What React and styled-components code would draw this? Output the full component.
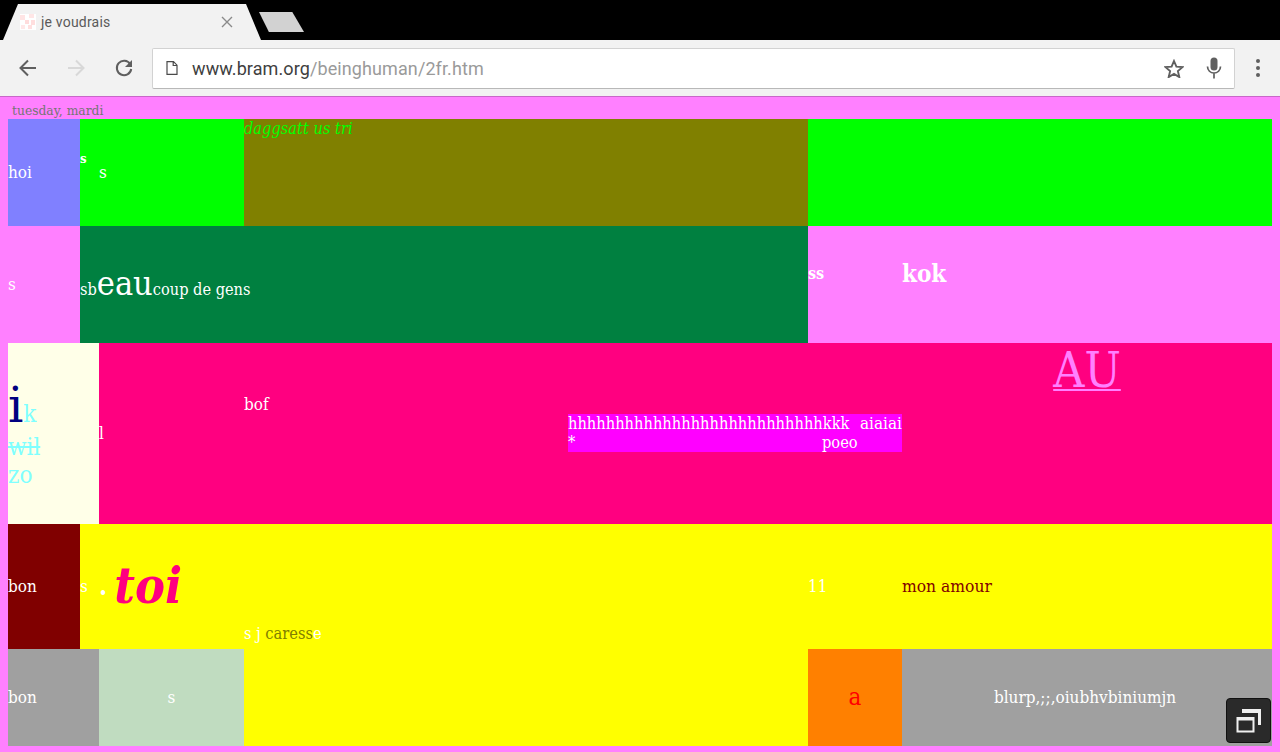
import React from 'react'
import styled, { createGlobalStyle } from 'styled-components'

const GlobalStyle = createGlobalStyle`
    html, body {
        margin: 0;
        padding: 0;
        background: #ff80ff;
    }
    body {
        font-family: "DejaVu Serif Condensed", "DejaVu Serif", serif;
        font-size: 17px;
        color: #fff;
    }
`

const App = () => {
  return (
    <Window>
      <GlobalStyle />
      <TabStrip>
        <Tab>
          <Favicon />
          <TabTitle>je voudrais</TabTitle>
          <CloseIcon />
        </Tab>
        <NewTab />
      </TabStrip>
      <Toolbar>
        <NavButton><BackIcon color="#5f5f5f" /></NavButton>
        <NavButton><ForwardIcon color="#d8d8d8" /></NavButton>
        <NavButton><ReloadIcon /></NavButton>
        <Omnibox>
          <PageIcon />
          <Url>www.bram.org<span>/beinghuman/2fr.htm</span></Url>
          <StarIcon />
          <MicIcon />
        </Omnibox>
        <MenuDots><i /><i /><i /></MenuDots>
      </Toolbar>
      <Page>
        <Day>tuesday, mardi</Day>
        <Table>
          <Cell $span={1} $bg="#8080ff">hoi</Cell>
          <Cell $span={2} $bg="#00ff00"><RaisedS>s</RaisedS><span>s</span></Cell>
          <Cell $span={2} $bg="#808000" $align="flex-start"><Dagg>daggsatt us tri</Dagg></Cell>
          <Cell $span={2} $bg="#00ff00" />

          <Cell $span={1}>s</Cell>
          <Cell $span={4} $bg="#008040"><Beau>sb<Eau>eau</Eau>coup de gens</Beau></Cell>
          <Cell $span={1}><Ss>ss</Ss></Cell>
          <Cell $span={1}><Kok>kok</Kok></Cell>

          <Cell $span={2} $bg="#ffffe8"><Ik><Big>i</Big>k<br /><s>wil</s><br />zo</Ik></Cell>
          <Cell $span={1} $bg="#ff0080">l</Cell>
          <Cell $span={1} $bg="#ff0080" $align="flex-start"><Bof>bof</Bof></Cell>
          <Cell $span={2} $bg="#ff0080">
            <Block>
              <span>hhhhhhhhhhhhhhhhhhhhhhhhhhhkkk</span>
              <Aiai>aiaiai</Aiai>
              <span>*</span>
              <span>poeo</span>
            </Block>
          </Cell>
          <Cell $span={1} $bg="#ff0080" $justify="center" $align="flex-start"><Au>AU</Au></Cell>

          <Cell $span={1} $bg="#800000">bon</Cell>
          <Cell $span={2} $bg="#ffff00"><NarrowS>s</NarrowS><Dot>.</Dot><Toi>toi</Toi></Cell>
          <Cell $span={2} $bg="#ffff00" $align="flex-end"><Caresse>s j <span>caress</span>e</Caresse></Cell>
          <Cell $span={1} $bg="#ffff00">11</Cell>
          <Cell $span={1} $bg="#ffff00"><Amour>mon amour</Amour></Cell>

          <Cell $span={2} $bg="#a0a0a0">bon</Cell>
          <Cell $span={1} $bg="#c0dcc0" $justify="center">s</Cell>
          <Cell $span={2} $bg="#ffff00" />
          <Cell $span={1} $bg="#ff8000" $justify="center"><LetterA>a</LetterA></Cell>
          <Cell $span={1} $bg="#a0a0a0" $justify="center"><Blurp>blurp,;;,oiubhvbiniumjn</Blurp></Cell>
        </Table>
      </Page>
      <TabSwitcher><SwitcherIcon /></TabSwitcher>
    </Window>
  )
}

export default App

const Favicon = () => (
  <FaviconSvg viewBox="0 0 16 16">
    <rect width="16" height="16" fill="#fff" />
    <rect x="0" y="1" width="5" height="5" fill="#ffe4e4" />
    <rect x="9" y="0" width="5" height="4" fill="#ffe6e6" />
    <rect x="5" y="6" width="4" height="4" fill="#ffdcdc" />
    <rect x="11" y="6" width="4" height="5" fill="#ffdede" />
    <rect x="1" y="11" width="4" height="4" fill="#ffe8e8" />
    <rect x="8" y="11" width="4" height="4" fill="#ffe0e0" />
  </FaviconSvg>
)

const CloseIcon = () => (
  <CloseSvg width="12" height="12" viewBox="0 0 12 12">
    <path d="M1 1l10 10M11 1L1 11" stroke="#8a8a8a" strokeWidth="1.4" fill="none" />
  </CloseSvg>
)

const BackIcon = ({ color }) => (
  <IconSvg width="20" height="20" viewBox="0 0 20 20">
    <path d="M18 10H3M10 2.500L2.500 10l7.500 7.500" stroke={color} strokeWidth="2" fill="none" />
  </IconSvg>
)

const ForwardIcon = ({ color }) => (
  <IconSvg width="20" height="20" viewBox="0 0 20 20">
    <path d="M2 10h15M10 2.500l7.500 7.500-7.500 7.500" stroke={color} strokeWidth="2" fill="none" />
  </IconSvg>
)

const ReloadIcon = () => (
  <IconSvg width="20" height="20" viewBox="0 0 20 20">
    <path d="M16.200 6.200A7.200 7.200 0 1 0 17.200 11" stroke="#5f5f5f" strokeWidth="2" fill="none" />
    <path d="M18 2v7h-7z" fill="#5f5f5f" />
  </IconSvg>
)

const PageIcon = () => (
  <IconSvg width="12" height="14" viewBox="0 0 12 14">
    <path d="M1 .7h6.500L11 4.200v9.100H1zM7.200.7v3.800H11" stroke="#4a4a4a" strokeWidth="1.200" fill="none" />
  </IconSvg>
)

const StarIcon = () => (
  <StarSvg width="20" height="19" viewBox="0 0 20 19">
    <path d="M10 2l2.400 5.600 6.100.5-4.600 4 1.400 6-5.300-3.200-5.300 3.200 1.400-6-4.600-4 6.100-.5z" stroke="#5f5f5f" strokeWidth="1.900" fill="none" />
  </StarSvg>
)

const MicIcon = () => (
  <MicSvg width="16" height="22" viewBox="0 0 16 22">
    <rect x="4.500" y="0.500" width="7" height="13" rx="3.500" fill="#5f5f5f" />
    <path d="M1.500 9.500c0 4 3 6.500 6.500 6.500s6.500-2.500 6.500-6.500M8 16v5.500" stroke="#5f5f5f" strokeWidth="1.700" fill="none" />
  </MicSvg>
)

const SwitcherIcon = () => (
  <IconSvg width="26" height="26" viewBox="0 0 26 26">
    <path d="M6 1h19v16h-3V5H6z" fill="#f0f0f0" />
    <rect x="1.500" y="10" width="16" height="13.500" fill="#2a2a2a" stroke="#f0f0f0" strokeWidth="2" />
    <rect x="1" y="9" width="17" height="3.500" fill="#f0f0f0" />
  </IconSvg>
)

const Window = styled.div`
    position: relative;
    height: 752px;
    overflow: hidden;
`
const TabStrip = styled.div`
    height: 40px;
    background: #000;
    display: flex;
    align-items: flex-end;
    padding-left: 3px;
`
const Tab = styled.div`
    width: 258px;
    height: 36px;
    box-sizing: border-box;
    padding: 0 28px 0 17px;
    background: #f2f2f2;
    clip-path: polygon(0 100%, 15px 0, 243px 0, 100% 100%);
    display: flex;
    align-items: center;
    gap: 5px;
`
const FaviconSvg = styled.svg`
    width: 16px;
    height: 16px;
    flex: none;
`
const IconSvg = styled.svg`
    display: block;
    flex: none;
`
const CloseSvg = styled(IconSvg)`
    margin-left: auto;
`
const StarSvg = styled(IconSvg)`
    margin-left: auto;
`
const MicSvg = styled(IconSvg)`
    margin-left: 22px;
    margin-right: 12px;
`
const TabTitle = styled.div`
    font-family: Roboto, sans-serif;
    font-size: 14px;
    letter-spacing: 0.2px;
    color: #5a5a5a;
`
const NewTab = styled.div`
    width: 45px;
    height: 20px;
    margin: 0 0 8px -2px;
    background: #d2d2d2;
    clip-path: polygon(0 0, 74% 0, 100% 100%, 22% 100%);
`
const Toolbar = styled.div`
    height: 57px;
    box-sizing: border-box;
    background: #f2f2f2;
    border-bottom: 1px solid #c868c8;
    display: flex;
    align-items: center;
    padding-left: 4px;
`
const NavButton = styled.div`
    width: 48px;
    display: flex;
    justify-content: center;
`
const Omnibox = styled.div`
    width: 1083px;
    height: 41px;
    box-sizing: border-box;
    margin-left: 4px;
    background: #fff;
    border: 1px solid #d2d2d2;
    border-bottom: 1px solid #b8b8b8;
    border-radius: 2px;
    display: flex;
    align-items: center;
    padding-left: 13px;
`
const Url = styled.div`
    margin-left: 14px;
    font-family: Roboto, sans-serif;
    font-size: 18px;
    letter-spacing: 0.1px;
    color: #404040;
    span {
        color: #9a9a9a;
    }
`
const MenuDots = styled.div`
    margin-left: 21px;
    display: flex;
    flex-direction: column;
    gap: 3px;
    i {
        display: block;
        width: 4px;
        height: 4px;
        border-radius: 50%;
        background: #5f5f5f;
    }
`
const Page = styled.div`
    padding: 0 8px;
`
const Day = styled.div`
    height: 22px;
    box-sizing: border-box;
    padding: 5px 0 0 4px;
    font-size: 13.700px;
    line-height: 16px;
    color: #757575;
`
const Table = styled.div`
    display: grid;
    grid-template-columns: 72px 19px 145px 324px 240px 94px 370px;
    grid-template-rows: 107px 117px 181px 125px 97px;
`
const Cell = styled.div`
    grid-column: span ${(p) => p.$span};
    background: ${(p) => p.$bg || 'transparent'};
    box-sizing: border-box;
    padding-bottom: 2px;
    display: flex;
    align-items: ${(p) => p.$align || 'center'};
    justify-content: ${(p) => p.$justify || 'flex-start'};
    white-space: pre;
    min-width: 0;
`
const RaisedS = styled.span`
    width: 19px;
    margin-bottom: 26px;
    font-size: 13px;
    font-weight: 700;
`
const NarrowS = styled.span`
    width: 19px;
`
const Dagg = styled.span`
    font-size: 16.300px;
    font-style: italic;
    color: #00ff00;
`
const Beau = styled.span`
    margin-top: -2px;
    font-size: 16.200px;
`
const Eau = styled.span`
    font-size: 34px;
`
const Ss = styled.span`
    margin-bottom: 20px;
    font-size: 16px;
    font-weight: 700;
`
const Kok = styled.span`
    margin-bottom: 20px;
    font-size: 24px;
    font-weight: 700;
`
const Ik = styled.div`
    font-size: 24px;
    line-height: 28px;
    color: #80ffff;
`
const Big = styled.span`
    font-family: "DejaVu Serif", serif;
    font-size: 48px;
    line-height: 56px;
    color: #000080;
`
const Bof = styled.span`
    margin-top: 51px;
`
const Block = styled.div`
    width: 334px;
    height: 38px;
    background: #ff00ff;
    display: grid;
    grid-template-columns: 254px 1fr;
    font-size: 16.300px;
    line-height: 19px;
`
const Aiai = styled.span`
    justify-self: end;
    font-size: 17px;
`
const Au = styled.span`
    font-size: 48px;
    line-height: 55px;
    color: #ff80ff;
    text-decoration: underline 2px;
    text-underline-offset: 2px;
`
const Dot = styled.span`
    font-size: 26px;
    font-weight: 700;
    margin-right: 7px;
`
const Toi = styled.span`
    font-size: 50px;
    font-weight: 700;
    font-style: italic;
    color: #ff0080;
`
const Caresse = styled.span`
    font-size: 16.300px;
    line-height: 26px;
    span {
        color: #808000;
    }
`
const Amour = styled.span`
    font-size: 17.300px;
    color: #800000;
`
const LetterA = styled.span`
    font-size: 24px;
    color: #ff0000;
`
const Blurp = styled.span`
    margin-right: 4px;
`
const TabSwitcher = styled.div`
    position: absolute;
    left: 1226px;
    top: 698px;
    width: 45px;
    height: 45px;
    background: #2a2a2a;
    border: 1px solid #111;
    box-sizing: border-box;
    border-radius: 4px;
    display: flex;
    align-items: center;
    justify-content: center;
`
